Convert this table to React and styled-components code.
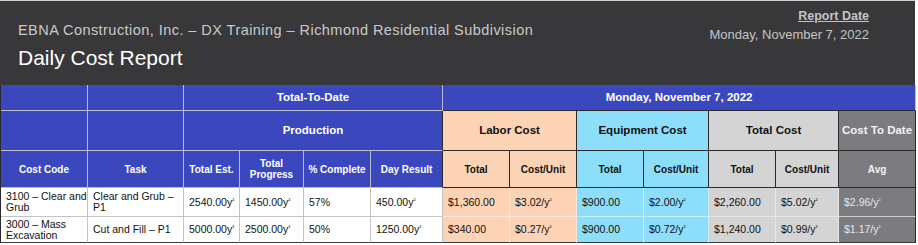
import React from "react";
import styled, { createGlobalStyle } from "styled-components";

const GlobalStyle = createGlobalStyle`
	body {
		margin: 0;
		background: #ffffff;
		font-family: "Liberation Sans", Arial, sans-serif;
	}
`;

const tones = {
	blue: { bg: "#3b48bd", fg: "#ffffff", line: "#b9bccf" },
	labor: { bg: "#fdd3b6", fg: "#111111", line: "#2a2a2a" },
	equip: { bg: "#8cdefb", fg: "#111111", line: "#2a2a2a" },
	total: { bg: "#d4d4d4", fg: "#111111", line: "#2a2a2a" },
	avg: { bg: "#7c7b7f", fg: "#f2f2f2", line: "#2a2a2a" },
};

const cellTones = {
	plain: { bg: "#ffffff", fg: "#111111", line: "#c4c4c4" },
	labor: { bg: "#fdd3b6", fg: "#111111", line: "#fde7d8" },
	equip: { bg: "#8cdefb", fg: "#111111", line: "#c9effd" },
	total: { bg: "#d4d4d4", fg: "#111111", line: "#e6e6e6" },
	avg: { bg: "#7c7b7f", fg: "#e6e6e6", line: "#c9c9c9" },
};

const widths = [87, 96, 56, 64, 67, 72, 67, 67, 67, 65, 67, 63, 77];

const rows = [
	{
		code: "3100 – Clear and Grub",
		task: "Clear and Grub – P1",
		est: "2540.00",
		progress: "1450.00",
		pct: "57%",
		day: "450.00",
		unit: "²",
		labor: "$1,360.00",
		laborUnit: "$3.02",
		equip: "$900.00",
		equipUnit: "$2.00",
		total: "$2,260.00",
		totalUnit: "$5.02",
		avg: "$2.96",
		h: 29,
	},
	{
		code: "3000 – Mass Excavation",
		task: "Cut and Fill – P1",
		est: "5000.00",
		progress: "2500.00",
		pct: "50%",
		day: "1250.00",
		unit: "³",
		labor: "$340.00",
		laborUnit: "$0.27",
		equip: "$900.00",
		equipUnit: "$0.72",
		total: "$1,240.00",
		totalUnit: "$0.99",
		avg: "$1.17",
		h: 26,
	},
];

function Yards({ value, unit, slash }) {
	return (
		<>
			{value}
			{slash ? "/" : ""}y<Sup>{unit}</Sup>
		</>
	);
}

export default function App() {
	return (
		<Page>
			<GlobalStyle />
			<Header>
				<TitleBlock>
					<Company>EBNA Construction, Inc. – DX Training – Richmond Residential Subdivision</Company>
					<ReportTitle>Daily Cost Report</ReportTitle>
				</TitleBlock>
				<DateBlock>
					<DateLabel>Report Date</DateLabel>
					<DateValue>Monday, November 7, 2022</DateValue>
				</DateBlock>
			</Header>
			<Table>
				<colgroup>
					{widths.map((w, i) => (
						<col key={i} style={{ width: w }} />
					))}
				</colgroup>
				<thead>
					<Row $h={26}>
						<HeadCell $tone="blue" />
						<HeadCell $tone="blue" />
						<HeadCell $tone="blue" colSpan={4} $big>
							Total-To-Date
						</HeadCell>
						<HeadCell $tone="blue" colSpan={7} $big $under>
							Monday, November 7, 2022
						</HeadCell>
					</Row>
					<Row $h={40}>
						<HeadCell $tone="blue" />
						<HeadCell $tone="blue" />
						<HeadCell $tone="blue" colSpan={4} $big $edge>
							Production
						</HeadCell>
						<HeadCell $tone="labor" colSpan={2} $big>
							Labor Cost
						</HeadCell>
						<HeadCell $tone="equip" colSpan={2} $big>
							Equipment Cost
						</HeadCell>
						<HeadCell $tone="total" colSpan={2} $big>
							Total Cost
						</HeadCell>
						<HeadCell $tone="avg" $big>
							Cost To Date
						</HeadCell>
					</Row>
					<Row $h={37}>
						<HeadCell $tone="blue">Cost Code</HeadCell>
						<HeadCell $tone="blue">Task</HeadCell>
						<HeadCell $tone="blue">Total Est.</HeadCell>
						<HeadCell $tone="blue">
							Total
							<br />
							Progress
						</HeadCell>
						<HeadCell $tone="blue">% Complete</HeadCell>
						<HeadCell $tone="blue" $edge>
							Day Result
						</HeadCell>
						<HeadCell $tone="labor">Total</HeadCell>
						<HeadCell $tone="labor">Cost/Unit</HeadCell>
						<HeadCell $tone="equip">Total</HeadCell>
						<HeadCell $tone="equip">Cost/Unit</HeadCell>
						<HeadCell $tone="total">Total</HeadCell>
						<HeadCell $tone="total">Cost/Unit</HeadCell>
						<HeadCell $tone="avg">Avg</HeadCell>
					</Row>
				</thead>
				<tbody>
					{rows.map((r, i) => {
						const last = i === rows.length - 1;
						return (
							<Row key={i} $h={r.h}>
								<Cell $tone="plain" $last={last}>{r.code}</Cell>
								<Cell $tone="plain" $last={last}>{r.task}</Cell>
								<Cell $tone="plain" $last={last}>
									<Yards value={r.est} unit={r.unit} />
								</Cell>
								<Cell $tone="plain" $last={last}>
									<Yards value={r.progress} unit={r.unit} />
								</Cell>
								<Cell $tone="plain" $last={last}>{r.pct}</Cell>
								<Cell $tone="plain" $last={last}>
									<Yards value={r.day} unit={r.unit} />
								</Cell>
								<Cell $tone="labor" $last={last}>{r.labor}</Cell>
								<Cell $tone="labor" $last={last}>
									<Yards value={r.laborUnit} unit={r.unit} slash />
								</Cell>
								<Cell $tone="equip" $last={last}>{r.equip}</Cell>
								<Cell $tone="equip" $last={last}>
									<Yards value={r.equipUnit} unit={r.unit} slash />
								</Cell>
								<Cell $tone="total" $last={last}>{r.total}</Cell>
								<Cell $tone="total" $last={last}>
									<Yards value={r.totalUnit} unit={r.unit} slash />
								</Cell>
								<Cell $tone="avg" $last={last} $end>
									<Yards value={r.avg} unit={r.unit} slash />
								</Cell>
							</Row>
						);
					})}
				</tbody>
			</Table>
		</Page>
	);
}

const Page = styled.div`
	width: 915px;
	border-top: 1px solid #cfcfcf;
`;

const Header = styled.header`
	height: 84px;
	background: #38383a;
	display: flex;
	justify-content: space-between;
	align-items: flex-start;
	padding: 0 46px 0 18px;
	box-sizing: border-box;
`;

const TitleBlock = styled.div`
	display: flex;
	flex-direction: column;
	padding-top: 20px;
`;

const Company = styled.div`
	font-size: 14.5px;
	line-height: 18px;
	letter-spacing: 0.45px;
	color: #c9c9c9;
`;

const ReportTitle = styled.h1`
	margin: 7px 0 0;
	font-size: 21px;
	line-height: 24px;
	font-weight: normal;
	color: #ffffff;
`;

const DateBlock = styled.div`
	display: flex;
	flex-direction: column;
	align-items: flex-end;
	padding-top: 7px;
`;

const DateLabel = styled.div`
	font-size: 12.5px;
	line-height: 16px;
	font-weight: bold;
	color: #c4c4c4;
	text-decoration: underline;
`;

const DateValue = styled.div`
	margin-top: 3px;
	font-size: 13px;
	line-height: 16px;
	color: #c4c4c4;
`;

const Table = styled.table`
	width: 915px;
	table-layout: fixed;
	border-collapse: separate;
	border-spacing: 0;
	border-left: 1px solid #2a2a2a;
`;

const Row = styled.tr`
	height: ${(p) => p.$h}px;
`;

const HeadCell = styled.th`
	padding: 0 2px;
	background: ${(p) => tones[p.$tone].bg};
	color: ${(p) => tones[p.$tone].fg};
	font-size: ${(p) => (p.$big ? "11.5px" : "10px")};
	line-height: 11px;
	font-weight: bold;
	text-align: center;
	vertical-align: middle;
	white-space: nowrap;
	border-right: 1px solid ${(p) => (p.$edge ? "#2a2a2a" : tones[p.$tone].line)};
	border-bottom: 1px solid ${(p) => (p.$under ? "#2a2a2a" : tones[p.$tone].line)};
`;

const Cell = styled.td`
	padding: 0 0 0 5px;
	background: ${(p) => cellTones[p.$tone].bg};
	color: ${(p) => cellTones[p.$tone].fg};
	font-size: 10.5px;
	line-height: 11px;
	text-align: left;
	vertical-align: middle;
	border-right: 1px solid ${(p) => (p.$end ? "#2a2a2a" : cellTones[p.$tone].line)};
	border-bottom: 1px solid ${(p) => (p.$last ? "#3a3a3a" : cellTones[p.$tone].line)};
`;

const Sup = styled.sup`
	font-size: 6px;
	line-height: 0;
	vertical-align: 4px;
`;
